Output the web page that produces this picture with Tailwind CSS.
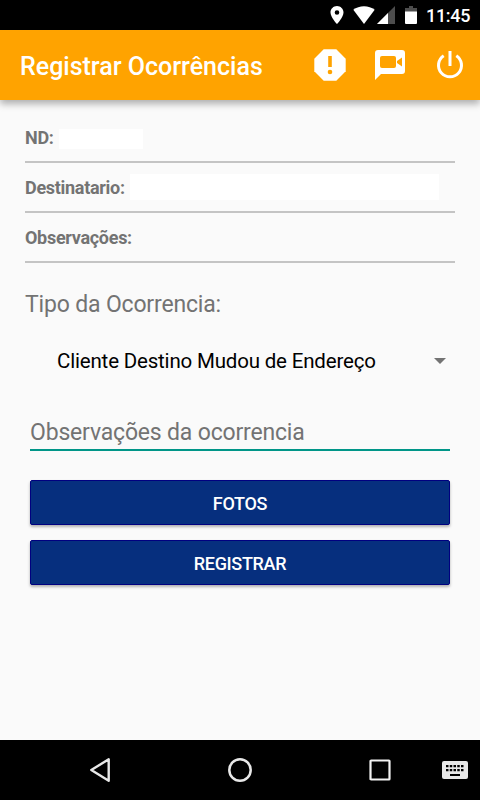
<!DOCTYPE html>
<html lang="pt-BR">
<head>
    <meta charset="UTF-8">
    <meta name="viewport" content="width=device-width, initial-scale=1.0">
    <title>Registrar Ocorrências</title>
    <script src="https://cdn.jsdelivr.net/npm/@tailwindcss/browser@4"></script>
</head>
<body class="bg-[#fafafa] font-['Roboto',sans-serif]">
    <div class="w-[480px] h-[800px] flex flex-col overflow-hidden">
        <!-- status bar -->
        <div class="h-[30px] shrink-0 bg-black flex items-center justify-end pr-[10px] text-white">
            <svg class="w-[14px] h-[18px] mr-[9px]" viewBox="0 0 14 18" fill="#fff" fill-rule="evenodd"><path d="M7 0C3.400 0 .5 2.900.5 6.400.5 11 7 18 7 18s6.500-7 6.500-11.600C13.500 2.900 10.600 0 7 0zm0 4.200a2.300 2.300 0 1 1 0 4.600 2.300 2.300 0 0 1 0-4.600z"/></svg>
            <svg class="w-[22px] h-[18px] mr-[2px]" viewBox="0 0 22 18"><path fill="#fff" d="M11 18 .3 3.800C3.200 1.500 7 .2 11 .2s7.800 1.300 10.700 3.600z"/></svg>
            <svg class="w-[18px] h-[18px] mr-[10px]" viewBox="0 0 18 18"><path fill="#4d4d4d" d="M18 0v18H0z"/><path fill="#fff" d="M11 7v11H0z"/></svg>
            <svg class="w-[12px] h-[18px] mr-[9px]" viewBox="0 0 12 18"><path fill="#4d4d4d" d="M4 0h4v2h4v4H0V2h4z"/><path fill="#fff" d="M0 5.500h12V17q0 1-1 1H1q-1 0-1-1z"/></svg>
            <span class="w-[44px] text-right text-[18px] leading-[30px] pt-[1px] tracking-[-0.3px] font-medium">11:45</span>
        </div>

        <!-- app bar -->
        <div class="relative h-[70px] shrink-0 bg-[#ffa300] flex items-center pl-5 pr-[15px] shadow-[0_4px_7px_rgba(0,0,0,0.3)]">
            <h1 class="grow text-[25px] leading-[30px] font-medium text-white pt-[3px] whitespace-nowrap">Registrar Ocorrências</h1>
            <svg class="w-8 h-8 mr-[29px]" viewBox="0 0 32 32"><path fill="#fff" d="M9.700.3h12.600l9.400 9.400v12.600l-9.400 9.400H9.700L.3 22.300V9.700z"/><path fill="#ffa300" d="M14.200 7h3.600v11h-3.600z"/><circle cx="16" cy="23" r="2.300" fill="#ffa300"/></svg>
            <svg class="w-[30px] h-[30px] mr-[31px]" viewBox="0 0 30 30"><path fill="#fff" d="M3 0h24q3 0 3 3v18q0 3-3 3H6l-6 6V3q0-3 3-3z"/><rect x="5" y="6" width="16" height="12" rx="2" fill="#ffa300"/><path fill="#ffa300" d="M27 7.500v9L22 13v-2z"/></svg>
            <svg class="w-[28px] h-[28px] mr-[1px]" viewBox="0 0 28 28" fill="none" stroke="#fff" stroke-width="3"><path d="M14 0v15M7.700 4.700a11.500 11.500 0 1 0 12.600 0"/></svg>
        </div>

        <!-- form -->
        <div class="grow px-[25px] pt-[13px] text-[#737373]">
            <div class="h-[50px] flex items-center border-b-2 border-[#c4c4c4] text-[18px] tracking-[-0.3px] font-bold">
                <span class="w-7">ND:</span>
                <span class="ml-[6px] mt-[3px] w-[84px] h-5 bg-white"></span>
            </div>
            <div class="h-[50px] flex items-center border-b-2 border-[#c4c4c4] text-[18px] tracking-[-0.3px] font-bold">
                <span class="w-[99px]">Destinatario:</span>
                <span class="ml-[6px] w-[309px] h-[26px] bg-white"></span>
            </div>
            <div class="h-[50px] flex items-center border-b-2 border-[#c4c4c4] text-[18px] tracking-[-0.3px] font-bold">
                <span>Observações:</span>
            </div>
            <p class="mt-[27px] text-[23px] tracking-[-0.17px] leading-[30px]">Tipo da Ocorrencia:</p>
            <div class="mt-[19px] h-[44px] pl-8 pr-[9px] flex items-center justify-between">
                <span class="text-[20.500px] tracking-[-0.18px] text-black">Cliente Destino Mudou de Endereço</span>
                <svg class="w-3 h-[6px]" viewBox="0 0 12 6"><path fill="#737373" d="M0 0h12L6 6z"/></svg>
            </div>
            <div class="mx-[5px] mt-[35px] h-[33px] border-b-2 border-[#009688] text-[23px] tracking-[-0.18px] leading-[30px]">Observações da ocorrencia</div>
            <button class="mx-[5px] mt-[29px] block w-[420px] h-[45px] rounded-[2px] border border-[#000080] bg-[#062f7e] pt-[1px] text-[18px] tracking-[-0.33px] font-medium text-white shadow-[0_2px_3px_rgba(0,0,0,0.3)]">FOTOS</button>
            <button class="mx-[5px] mt-[15px] block w-[420px] h-[45px] rounded-[2px] border border-[#000080] bg-[#062f7e] pt-[1px] text-[18px] tracking-[-0.33px] font-medium text-white shadow-[0_2px_3px_rgba(0,0,0,0.3)]">REGISTRAR</button>
        </div>

        <!-- navigation bar -->
        <div class="h-[60px] shrink-0 bg-black flex items-center pl-[90px] pr-3">
            <svg class="w-5 h-6 mr-[118px]" viewBox="0 0 20 24" fill="none" stroke="#e8e8e8" stroke-width="2.400" stroke-linejoin="round"><path d="M18.700 1.300v21.400L1.300 12z"/></svg>
            <svg class="w-6 h-6 mr-[117px]" viewBox="0 0 24 24" fill="none" stroke="#e8e8e8" stroke-width="2.500"><circle cx="12" cy="12" r="10.700"/></svg>
            <svg class="w-[22px] h-[22px]" viewBox="0 0 22 22" fill="none" stroke="#f0f0f0" stroke-width="2.200"><rect x="1.500" y="1.500" width="19" height="19" rx=".6"/></svg>
            <svg class="ml-auto w-[26px] h-[18px]" viewBox="0 0 26 18"><rect width="26" height="18" rx="2" fill="#e8e8e8"/><path stroke="#000" stroke-width="2.200" stroke-dasharray="2.500 1.250" d="M4 5.200h18M4 9.200h18"/><path fill="#000" d="M8 13h10v2H8z"/></svg>
        </div>
    </div>
</body>
</html>
